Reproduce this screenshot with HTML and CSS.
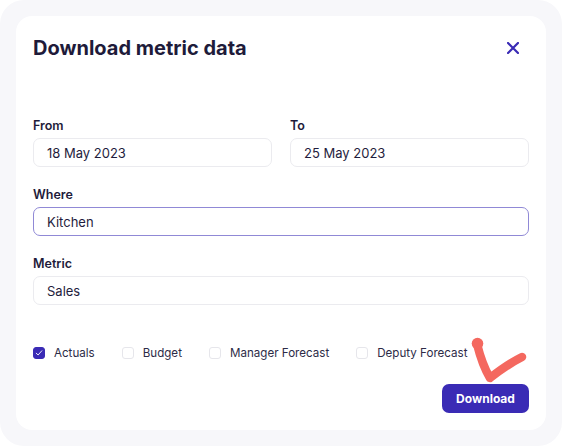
FILE: index.html
```html
<!DOCTYPE html>
<html lang="en">
<head>
<meta charset="utf-8">
<title>Download metric data</title>
<link rel="stylesheet" href="styles.css">
</head>
<body>
<div class="frame">
  <div class="card">
    <div class="header">
      <h1 class="title">Download metric data</h1>
      <button class="close" aria-label="Close">
        <svg width="12" height="12" viewBox="0 0 12 12"><path d="M1 1 L11 11 M11 1 L1 11" stroke="#3a2bb5" stroke-width="2.2" stroke-linecap="square" fill="none"/></svg>
      </button>
    </div>
    <div class="form">
      <div class="row">
        <div class="field">
          <label class="label">From</label>
          <div class="input">18 May 2023</div>
        </div>
        <div class="field">
          <label class="label">To</label>
          <div class="input">25 May 2023</div>
        </div>
      </div>
      <div class="field">
        <label class="label">Where</label>
        <div class="input focused">Kitchen</div>
      </div>
      <div class="field">
        <label class="label">Metric</label>
        <div class="input">Sales</div>
      </div>
    </div>
    <div class="checks">
      <div class="check"><span class="box checked"><svg width="8" height="8" viewBox="0 0 8 8"><path d="M1.2 4.2 L3.1 6 L6.8 1.8" stroke="#fff" stroke-width="0.9" fill="none" stroke-linecap="round" stroke-linejoin="round"/></svg></span>Actuals</div>
      <div class="check"><span class="box"></span>Budget</div>
      <div class="check"><span class="box"></span>Manager Forecast</div>
      <div class="check"><span class="box"></span>Deputy Forecast</div>
    </div>
    <div class="footer">
      <button class="download">Download</button>
    </div>
    <svg class="annotation" width="66" height="54" viewBox="0 0 66 54"><path d="M12 9 C15 21 19 33 25 43 C34 36 45 28 57 22" stroke="#f4685f" stroke-width="8.5" fill="none" stroke-linecap="round" stroke-linejoin="round"/><circle cx="12.5" cy="8.5" r="5.8" fill="#f4685f"/></svg>
  </div>
</div>
</body>
</html>
```
FILE: styles.css
```css
* { box-sizing: border-box; }
html, body { margin: 0; padding: 0; background: #ffffff; }
body {
  font-family: Inter, "Noto Sans", "Liberation Sans", sans-serif;
  color: #1f1d3d;
}
.frame {
  width: 562px;
  height: 446px;
  background: #f7f7fa;
  border-radius: 24px;
  padding: 16px;
}
.card {
  position: relative;
  height: 414px;
  background: #ffffff;
  border-radius: 16px;
  padding: 16px 17px 17px 17px;
  display: flex;
  flex-direction: column;
}
.header {
  display: flex;
  align-items: center;
  justify-content: space-between;
  height: 32px;
  margin-bottom: 53px;
}
.title {
  margin: 0;
  font-size: 20px;
  line-height: 28px;
  font-weight: 700;
  color: #1e1b3a;
}
.close {
  width: 32px;
  height: 32px;
  border: 0;
  background: transparent;
  padding: 0;
  display: flex;
  align-items: center;
  justify-content: center;
}
.form {
  display: flex;
  flex-direction: column;
  gap: 19px;
}
.row {
  display: grid;
  grid-template-columns: 1fr 1fr;
  gap: 18px;
}
.field {
  display: flex;
  flex-direction: column;
  gap: 5px;
}
.label {
  font-size: 12.5px;
  line-height: 16px;
  font-weight: 600;
  color: #1e1b3a;
  padding-top: 1px;
  margin-bottom: -1px;
}
.input {
  height: 29px;
  border: 1px solid #ebebef;
  border-radius: 7px;
  padding: 0 13px;
  display: flex;
  align-items: center;
  font-size: 13px;
  color: #1f1d3d;
}
.input.focused { border-color: #9089d6; }
.checks {
  display: flex;
  align-items: center;
  gap: 27px;
  margin-top: 40px;
  height: 16px;
}
.check {
  display: flex;
  align-items: center;
  gap: 9px;
  font-size: 11.6px;
  line-height: 16px;
  color: #2d2b47;
}
.box {
  width: 12px;
  height: 12px;
  border: 1px solid #e6e6eb;
  border-radius: 3px;
  display: flex;
  align-items: center;
  justify-content: center;
}
.box.checked { background: #3a2bb5; border-color: #3a2bb5; }
.footer {
  margin-top: auto;
  display: flex;
  justify-content: flex-end;
}
.download {
  width: 87px;
  height: 29px;
  border: 0;
  border-radius: 7px;
  background: #3a2bb5;
  color: #ffffff;
  font-family: Inter, "Noto Sans", "Liberation Sans", sans-serif;
  font-size: 12px;
  font-weight: 700;
  padding: 0;
}
.annotation {
  position: absolute;
  left: 449px;
  top: 319px;
}
```
